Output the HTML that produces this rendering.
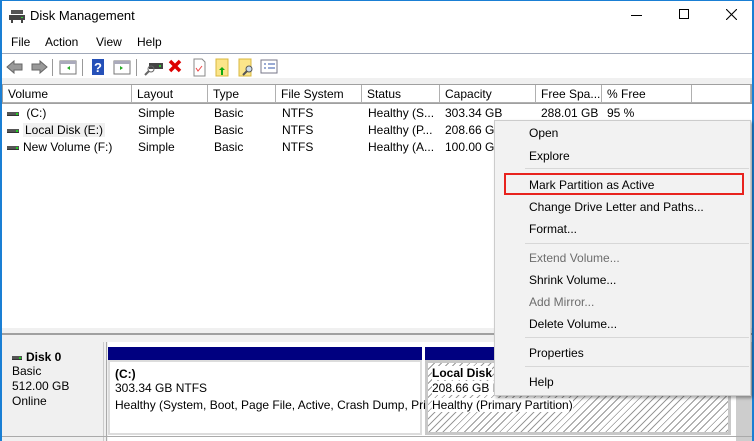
<!DOCTYPE html>
<html><head><meta charset="utf-8"><style>
*{margin:0;padding:0;box-sizing:border-box}
body{width:754px;height:441px;overflow:hidden;background:#fff;font-family:"Liberation Sans",sans-serif;font-size:12px;color:#000;position:relative}
.a{position:absolute;white-space:nowrap}
.hd{position:absolute;top:85px;height:18px;background:#fff;border-right:1px solid #b0b0b0;border-bottom:1px solid #b0b0b0;padding:2px 0 0 5px;font-size:12px}
.m{position:absolute;left:529px;font-size:12px}
.sep{position:absolute;left:525px;width:224px;height:1px;background:#d7d7d7}
.drv{display:inline-block;width:12px;height:4px;background:#555;border-bottom:1px solid #333;vertical-align:middle;margin-right:4px;position:relative}
.drv:after{content:"";position:absolute;right:1px;top:1px;width:2px;height:2px;background:#2c2}
</style></head><body>
<div class="a" style="left:0;top:0;width:2px;height:441px;background:#1a7fd4"></div>
<div class="a" style="right:0;top:0;width:2px;height:441px;background:#1a7fd4"></div>
<div class="a" style="left:0;top:0;width:754px;height:1px;background:#1a7fd4"></div>
<!-- title -->
<svg class="a" style="left:9px;top:9px" width="16" height="14"><rect x="2" y="1" width="12" height="4" fill="#555"/><rect x="0" y="6" width="16" height="5" fill="#444"/><rect x="12" y="8" width="2" height="1" fill="#3c3"/><rect x="2" y="11" width="2" height="3" fill="#444"/><rect x="12" y="11" width="2" height="3" fill="#444"/></svg>
<div class="a" style="left:30px;top:8px;font-size:13px">Disk Management</div>
<div class="a" style="left:631px;top:15px;width:11px;height:1px;background:#000"></div>
<div class="a" style="left:679px;top:9px;width:10px;height:10px;border:1px solid #000"></div>
<svg class="a" style="left:726px;top:9px" width="11" height="11"><path d="M0 0L11 11M11 0L0 11" stroke="#000" stroke-width="1.1"/></svg>
<!-- menu -->
<div class="a" style="left:11px;top:35px">File</div>
<div class="a" style="left:45px;top:35px">Action</div>
<div class="a" style="left:96px;top:35px">View</div>
<div class="a" style="left:137px;top:35px">Help</div>
<div class="a" style="left:2px;top:53px;width:750px;height:1px;background:#a0a8b8"></div>
<!-- toolbar -->
<svg class="a" style="left:4px;top:55px" width="290" height="24">
<path d="M3 12l7-6v3h8v6h-8v3z" fill="#999" stroke="#666"/>
<path d="M43 12l-7-6v3h-8v6h8v3z" fill="#999" stroke="#666"/>
<rect x="48" y="4" width="1" height="17" fill="#999"/>
<rect x="56" y="6" width="16" height="13" fill="#fff" stroke="#777"/><rect x="56" y="6" width="16" height="3" fill="#aab"/><path d="M66 11l-3 2 3 2z" fill="#2a2"/>
<rect x="78" y="4" width="1" height="17" fill="#999"/>
<rect x="88" y="4" width="12" height="16" fill="#2550b8"/><text x="90" y="17" fill="#fff" font-size="13" font-weight="bold" font-family="Liberation Sans">?</text>
<rect x="110" y="6" width="16" height="13" fill="#fff" stroke="#777"/><rect x="110" y="6" width="16" height="3" fill="#aab"/><path d="M116 11l3 2-3 2z" fill="#2a2"/>
<rect x="132" y="4" width="1" height="17" fill="#999"/>
<rect x="145" y="8" width="14" height="6" fill="#444"/><rect x="155" y="10" width="2" height="2" fill="#3c3"/><circle cx="147" cy="14" r="3" fill="none" stroke="#666"/><path d="M145 16l-4 4" stroke="#666" stroke-width="2"/>
<path d="M166 6l10 10M176 6l-10 10" stroke="#d00" stroke-width="3.5"/>
<path d="M190 4h8l3 3v14h-11z" fill="#fff" stroke="#888"/><path d="M192 13l2 3 4-5" stroke="#e44" fill="none"/>
<rect x="212" y="4" width="12" height="17" fill="#fbe58a" stroke="#d8b840"/><path d="M218 12l-3 3h2v5h2v-5h2z" fill="#1a1"/>
<rect x="235" y="4" width="12" height="17" fill="#fbe58a" stroke="#d8b840"/><circle cx="245" cy="14" r="3" fill="#cde" stroke="#555"/><path d="M243 16l-4 4" stroke="#555" stroke-width="2"/>
<rect x="257" y="5" width="16" height="13" fill="#fff" stroke="#778"/><path d="M260 9h2M260 13h2M264 9h7M264 13h7" stroke="#35a"/>
</svg>
<div class="a" style="left:2px;top:78px;width:750px;height:7px;background:#f0f0f0"></div>
<!-- header -->
<div class="a" style="left:2px;top:84px;width:750px;height:20px;background:#a0a0a0"></div>
<div class="hd" style="left:3px;width:129px">Volume</div>
<div class="hd" style="left:132px;width:76px">Layout</div>
<div class="hd" style="left:208px;width:68px">Type</div>
<div class="hd" style="left:276px;width:86px">File System</div>
<div class="hd" style="left:362px;width:78px">Status</div>
<div class="hd" style="left:440px;width:96px">Capacity</div>
<div class="hd" style="left:536px;width:66px">Free Spa...</div>
<div class="hd" style="left:602px;width:90px">% Free</div>
<div class="hd" style="left:692px;width:59px"></div>
<!-- rows -->
<div class="a" style="left:7px;top:106px"><span class="drv"></span> (C:)</div>
<div class="a" style="left:7px;top:123px"><span class="drv"></span><span style="background:#f0f0f0;padding:0 2px">Local Disk (E:)</span></div>
<div class="a" style="left:7px;top:140px"><span class="drv"></span>New Volume (F:)</div>
<div class="a" style="left:138px;top:106px">Simple</div><div class="a" style="left:138px;top:123px">Simple</div><div class="a" style="left:138px;top:140px">Simple</div>
<div class="a" style="left:214px;top:106px">Basic</div><div class="a" style="left:214px;top:123px">Basic</div><div class="a" style="left:214px;top:140px">Basic</div>
<div class="a" style="left:282px;top:106px">NTFS</div><div class="a" style="left:282px;top:123px">NTFS</div><div class="a" style="left:282px;top:140px">NTFS</div>
<div class="a" style="left:368px;top:106px">Healthy (S...</div><div class="a" style="left:368px;top:123px">Healthy (P...</div><div class="a" style="left:368px;top:140px">Healthy (A...</div>
<div class="a" style="left:445px;top:106px">303.34 GB</div><div class="a" style="left:445px;top:123px">208.66 GB</div><div class="a" style="left:445px;top:140px">100.00 GB</div>
<div class="a" style="left:541px;top:106px">288.01 GB</div>
<div class="a" style="left:607px;top:106px">95 %</div>
<!-- splitter / bottom pane -->
<div class="a" style="left:2px;top:328px;width:750px;height:113px;background:#f0f0f0"></div>
<div class="a" style="left:2px;top:333px;width:750px;height:2px;background:#a0a0a0"></div>
<div class="a" style="left:4px;top:342px;width:100px;height:99px;background:#f0f0f0;border-right:1px solid #ccc"></div>
<div class="a" style="left:106px;top:342px;width:1px;height:99px;background:#aaa"></div>
<div class="a" style="left:12px;top:350px;font-weight:bold"><span class="drv" style="width:10px"></span>Disk 0</div>
<div class="a" style="left:12px;top:364px;line-height:15px">Basic<br>512.00 GB<br>Online</div>
<div class="a" style="left:108px;top:342px;width:628px;height:99px;background:#fff"></div>
<div class="a" style="left:108px;top:347px;width:314px;height:13px;background:#000080"></div>
<div class="a" style="left:425px;top:347px;width:311px;height:13px;background:#000080"></div>
<div class="a" style="left:108px;top:360px;width:314px;height:75px;background:#fff;border:2px solid #dcdcdc"></div>
<div class="a" style="left:425px;top:360px;width:306px;height:75px;border:3px solid #c8c8c8;background:repeating-linear-gradient(135deg,#fff 0 4px,#999 4px 5px)"></div>
<div class="a" style="left:736px;top:342px;width:16px;height:99px;background:#cdcdcd"></div>
<div class="a" style="left:115px;top:366px;font-weight:bold;line-height:16px">(C:)</div>
<div class="a" style="left:115px;top:381px">303.34 GB NTFS</div>
<div class="a" style="left:115px;top:398px">Healthy (System, Boot, Page File, Active, Crash Dump, Pri</div>
<div class="a" style="left:432px;top:366px;font-weight:bold;background:#fff">Local Disk</div>
<div class="a" style="left:432px;top:381px;background:#fff">208.66 GB N</div>
<div class="a" style="left:432px;top:398px;background:#fff">Healthy (Primary Partition)</div>
<div class="a" style="left:2px;top:436px;width:750px;height:1px;background:#aaa"></div>
<!-- context menu -->
<div class="a" style="left:494px;top:120px;width:257px;height:276px;background:#f2f2f2;border:1px solid #ccc;box-shadow:2px 2px 3px rgba(0,0,0,.35)"></div>
<div class="m" style="top:126px">Open</div>
<div class="m" style="top:149px">Explore</div>
<div class="sep" style="top:168px"></div>
<div class="a" style="left:504px;top:173px;width:240px;height:22px;border:2px solid #e8231e"></div>
<div class="m" style="top:178px">Mark Partition as Active</div>
<div class="m" style="top:200px">Change Drive Letter and Paths...</div>
<div class="m" style="top:222px">Format...</div>
<div class="sep" style="top:243px"></div>
<div class="m" style="top:251px;color:#6d6d6d">Extend Volume...</div>
<div class="m" style="top:273px">Shrink Volume...</div>
<div class="m" style="top:295px;color:#6d6d6d">Add Mirror...</div>
<div class="m" style="top:317px">Delete Volume...</div>
<div class="sep" style="top:337px"></div>
<div class="m" style="top:346px">Properties</div>
<div class="sep" style="top:366px"></div>
<div class="m" style="top:375px">Help</div>
</body></html>
